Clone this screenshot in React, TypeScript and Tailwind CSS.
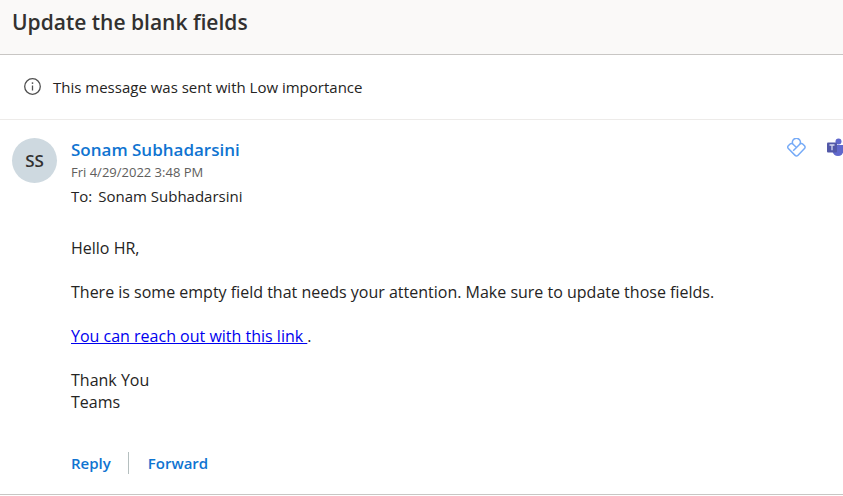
export default function App() {
  return (
    <div className="min-h-screen overflow-x-hidden bg-white font-['Open_Sans','Noto_Sans',sans-serif] text-[#252423]">
      <header className="border-b border-[#c8c6c4] bg-[#faf9f8] px-3 pt-2 pb-[18px]">
        <h1 className="text-[21px] leading-7 font-semibold text-[#323130]">Update the blank fields</h1>
      </header>

      <div className="flex items-center border-b border-[#edebe9] pt-5 pr-3 pb-5 pl-6" role="note">
        <svg className="size-[18px] shrink-0" viewBox="0 0 18 18" fill="none" stroke="#505050" aria-hidden="true">
          <circle cx="8.500" cy="8.500" r="7.8" strokeWidth="1.3" />
          <path d="M8.500 7.500v5" strokeWidth="1.3" />
          <circle cx="8.500" cy="5.1" r="0.9" fill="#505050" stroke="none" />
        </svg>
        <p className="ml-[11px] text-[15px] leading-6">This message was sent with Low importance</p>
      </div>

      <article className="flex gap-[14px] border-b border-[#c8c6c4] px-3 pt-[18px] pb-5">
        <div className="flex size-[45px] shrink-0 items-center justify-center rounded-full bg-[#ced9e0] text-[17px] font-semibold text-[#323130]">
          SS
        </div>

        <div className="min-w-0 flex-1">
          <div className="flex items-start justify-between">
            <div>
              <h2 className="text-[17px] leading-6 font-semibold text-[#0f74d1]">Sonam Subhadarsini</h2>
              <p className="text-[13px] leading-5 text-[#605e5c]">Fri 4/29/2022 3:48 PM</p>
              <p className="mt-0.5 flex gap-1.5 text-[15px] leading-6">
                <span>To:</span>
                <span>Sonam Subhadarsini</span>
              </p>
            </div>
            <div className="-mr-5 flex gap-[21px]">
              <button type="button" aria-label="Add-in">
                <svg className="size-[19px]" viewBox="0 0 19 19" fill="none" stroke="#75aaf7" strokeWidth="1.5" strokeLinejoin="round" aria-hidden="true">
                  <path d="M5.800 6A4 4 0 1 1 13 6" />
                  <path d="M9.500 9.500 13 6a1.900 1.900 0 0 1 2.700 0l1.800 1.800a1.900 1.900 0 0 1 0 2.700l-6.700 6.900a1.900 1.900 0 0 1-2.700 0L1.300 10.500a1.900 1.900 0 0 1 0-2.700L3.100 6a1.900 1.900 0 0 1 2.700 0l3.700 3.500-3.300 3.300" />
                </svg>
              </button>
              <button type="button" aria-label="Share to Teams">
                <svg className="h-[19px] w-6" viewBox="0 0 24 19" aria-hidden="true">
                  <circle cx="18" cy="4" r="2.100" fill="#5059c9" />
                  <path d="M14 7h7v6a4 4 0 0 1-7 0z" fill="#5059c9" />
                  <circle cx="11.500" cy="3.500" r="3" fill="#6068cc" />
                  <path d="M5.500 7h11v5.500a5.500 5.500 0 0 1-11 0z" fill="#6068cc" />
                  <rect y="4.500" width="10" height="10" rx="1" fill="#5258a8" />
                  <path d="M2.500 7h5M5 7v5.300" stroke="#d5d7f0" strokeWidth="1.300" />
                </svg>
              </button>
            </div>
          </div>

          <div className="mt-[29px] space-y-[22px] text-[16px] leading-[22px]">
            <p>Hello HR,</p>
            <p>There is some empty field that needs your attention. Make sure to update those fields.</p>
            <p>
              <a href="#link" className="text-[#0000ee] underline">You can reach out with this link </a>.
            </p>
            <p>
              Thank You
              <br />
              Teams
            </p>
          </div>

          <div className="mt-[39px] flex items-center text-[15px] leading-[22px] font-semibold text-[#0f74d1]">
            <button type="button" className="border-r border-[#b5bfbf] pr-[17px]">Reply</button>
            <button type="button" className="pl-[19px]">Forward</button>
          </div>
        </div>
      </article>
    </div>
  );
}
